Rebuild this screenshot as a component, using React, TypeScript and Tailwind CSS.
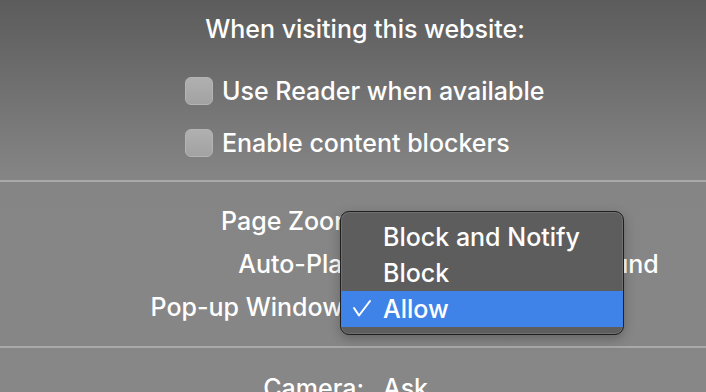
import React from 'react';

const rows = [
    { label: 'Page Zoom:', value: '100%' },
    { label: 'Auto-Play:', value: 'Stop Media with Sound' },
    { label: 'Pop-up Windows:', value: 'Allow' },
];

const menuItems = ['Block and Notify', 'Block', 'Allow'];

const Checkbox = ({ label }: { label: string }) => (
    <div className="flex h-[52px] items-center gap-[9px]">
        <span className="h-[28px] w-[28px] rounded-[6px] border border-[#b4b4b4] bg-gradient-to-b from-[#b0b0b0] to-[#a2a2a2]" />
        <span>{label}</span>
    </div>
);

const App = () => {
    return (
        <div
            className="relative h-[392px] w-[706px] overflow-hidden bg-gradient-to-b from-[#5c5c5c] via-[#858585] via-45% to-[#878787] text-[25px] font-medium leading-none text-white"
            style={{ fontFamily: 'Inter, "Noto Sans", sans-serif' }}
        >
            <div className="flex h-[58px] items-center justify-center pl-[24px]">When visiting this website:</div>
            <div className="mt-[7px] flex flex-col pl-[185px]">
                <Checkbox label="Use Reader when available" />
                <Checkbox label="Enable content blockers" />
            </div>
            <div className="mt-[11px] h-[2px] bg-[#a9a9a9]" />

            <div className="flex flex-col pt-[18px] pb-[17px]">
                {rows.map((row) => (
                    <div key={row.label} className="flex h-[43px] items-center">
                        <span className="w-[364px] text-right">{row.label}</span>
                        <span className="pl-[19px]">{row.value}</span>
                    </div>
                ))}
            </div>
            <div className="h-[2px] bg-[#a9a9a9]" />
            <div className="flex h-[62px] items-center pt-[18px]">
                <span className="w-[364px] text-right">Camera:</span>
                <span className="pl-[19px]">Ask</span>
            </div>

            {/* popup menu */}
            <div className="absolute left-[340px] top-[211px] w-[284px] rounded-[9px] border border-[#1f1f1f] bg-[#5d5d5d] py-[7px] shadow-[inset_0_0_0_1px_rgba(255,255,255,0.12),0_4px_12px_rgba(0,0,0,0.25)]">
                {menuItems.map((item) => (
                    <div
                        key={item}
                        className={`relative flex h-[36px] items-center pl-[42px] ${item === 'Allow' ? 'bg-[#3f83e8]' : ''}`}
                    >
                        {item === 'Allow' && (
                            <svg className="absolute left-[11px] top-[8px]" width="20" height="20" viewBox="0 0 20 20" fill="none">
                                <path d="M2 9 L7 16.5 L18 2" stroke="white" strokeWidth="2" strokeLinecap="round" strokeLinejoin="round" />
                            </svg>
                        )}
                        {item}
                    </div>
                ))}
            </div>
        </div>
    );
};

export default App;
